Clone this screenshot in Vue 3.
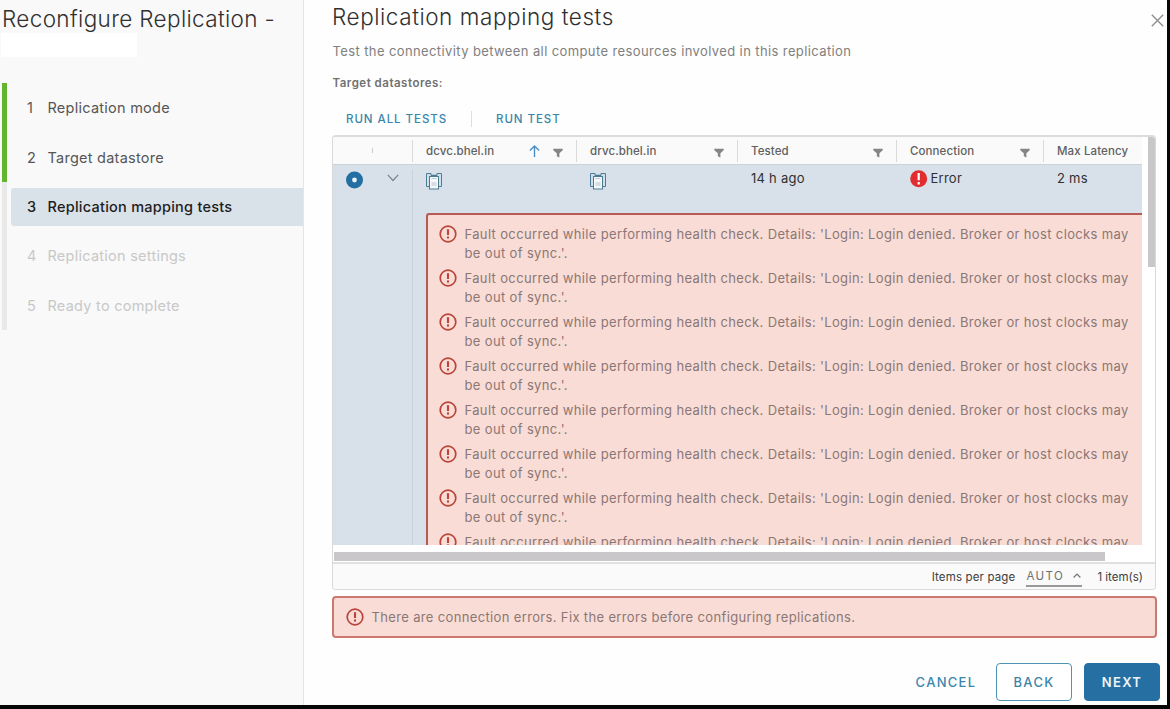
<script setup>
import { h } from 'vue'

const steps = [
  { n: 1, label: 'Replication mode', state: 'done' },
  { n: 2, label: 'Target datastore', state: 'done' },
  { n: 3, label: 'Replication mapping tests', state: 'current' },
  { n: 4, label: 'Replication settings', state: 'pending' },
  { n: 5, label: 'Ready to complete', state: 'pending' },
]

const faults = Array.from({ length: 8 }, (_, i) => i)

const AlertIcon = () =>
  h('svg', { width: 18, height: 18, viewBox: '0 0 18 18', fill: 'none', stroke: '#b8443a' }, [
    h('circle', { cx: 9, cy: 9, r: 7.8, 'stroke-width': 1.7 }),
    h('path', { d: 'M9 4.2V10', 'stroke-width': 2.1 }),
    h('path', { d: 'M9 11.4V13.6', 'stroke-width': 2.1 }),
  ])

const FilterIcon = () =>
  h('svg', { width: 10, height: 10, viewBox: '0 0 10 10', fill: '#858585' }, [
    h('path', { d: 'M0.3 0.8H9.7V2.2L6.4 5.2V9.6L3.8 8.2V5.2L0.3 2.2Z' }),
  ])

const HostIcon = () =>
  h('svg', { width: 16, height: 17, viewBox: '0 0 16 17', fill: 'none', stroke: '#4d7c95' }, [
    h('path', { d: 'M3.5 13.5H0.5V0.5H5V2.5', fill: '#cfe0ea' }),
    h('path', { d: 'M12.5 13.5H15.5V0.5H11V2.5', fill: '#cfe0ea' }),
    h('path', { d: 'M5 2.5H11', 'stroke-width': 1.4 }),
    h('rect', { x: 3.5, y: 3.5, width: 9, height: 12.5, fill: '#f5f8fa' }),
    h('path', { d: 'M5.5 5.5H10.5', stroke: '#bccdd7' }),
    h('rect', { x: 5.5, y: 9, width: 5, height: 4, fill: '#d3dde3', stroke: 'none' }),
  ])
</script>

<template>
  <div class="screen">
    <div class="wizard">
      <aside class="sidebar">
        <h1>Reconfigure Replication -</h1>
        <div class="blank"></div>
        <ol class="steps">
          <li v-for="s in steps" :key="s.n" :class="s.state">
            <div class="step">
              <span class="num">{{ s.n }}</span>
              <span class="label">{{ s.label }}</span>
            </div>
          </li>
        </ol>
      </aside>

      <main class="main">
        <header class="title-row">
          <h2>Replication mapping tests</h2>
          <svg class="close" width="13" height="13" viewBox="0 0 13 13" stroke="#8f8f8f" stroke-width="1.4">
            <path d="M0.8 0.8L12.2 12.2M12.2 0.8L0.8 12.2" />
          </svg>
        </header>
        <p class="desc">Test the connectivity between all compute resources involved in this replication</p>
        <p class="target">Target datastores:</p>
        <div class="actions">
          <span class="run-all">RUN ALL TESTS</span>
          <i class="divider"></i>
          <span class="run-one">RUN TEST</span>
        </div>

        <section class="grid">
          <div class="viewport">
            <div class="table">
              <div class="row head">
                <div class="cell c0"><i class="tick"></i></div>
                <div class="cell"><span>dcvc.bhel.in</span>
                  <svg class="sort" width="11" height="12" viewBox="0 0 11 12" fill="none" stroke="#4a90c8" stroke-width="1.4">
                    <path d="M5.5 12V1.2M0.9 5.6L5.5 1L10.1 5.6" />
                  </svg>
                  <FilterIcon class="filter" />
                </div>
                <div class="cell"><span>drvc.bhel.in</span><FilterIcon class="filter" /></div>
                <div class="cell"><span>Tested</span><FilterIcon class="filter" /></div>
                <div class="cell"><span>Connection</span><FilterIcon class="filter" /></div>
                <div class="cell"><span>Max Latency</span></div>
              </div>
              <div class="body">
                <div class="gutter">
                  <svg width="18" height="18" viewBox="0 0 18 18">
                    <circle cx="9.5" cy="9" r="8.5" fill="#236fa3" />
                    <circle cx="9.5" cy="9" r="2.4" fill="#e8f2f8" />
                  </svg>
                  <svg class="chev" width="12" height="8" viewBox="0 0 12 8" fill="none" stroke="#7d878d" stroke-width="1.3">
                    <path d="M0.8 0.9L6 6.5L11.2 0.9" />
                  </svg>
                </div>
                <div class="content">
                  <div class="row data">
                    <div class="cell"><HostIcon /></div>
                    <div class="cell"><HostIcon /></div>
                    <div class="cell"><span class="v-ago">14 h ago</span></div>
                    <div class="cell">
                      <svg class="bang" width="18" height="18" viewBox="0 0 18 18">
                        <circle cx="8.7" cy="8.7" r="8.5" fill="#e12d30" />
                        <path d="M8.7 3V10.2M8.7 12V14.4" stroke="#fff" stroke-width="2.2" />
                      </svg>
                      <span class="v-err">Error</span>
                    </div>
                    <div class="cell"><span class="v-ms">2 ms</span></div>
                  </div>
                  <div class="faults">
                    <div v-for="f in faults" :key="f" class="fault">
                      <AlertIcon />
                      <p>Fault occurred while performing health check. Details: 'Login: Login denied. Broker or host clocks may be out of sync.'.</p>
                    </div>
                  </div>
                </div>
              </div>
            </div>
            <div class="vtrack"><div class="vthumb"></div></div>
          </div>
          <div class="htrack"><div class="hthumb"></div></div>
          <footer class="pager">
            <span class="ipp">Items per page</span>
            <span class="select"><span class="auto">AUTO</span>
              <svg width="8" height="5" viewBox="0 0 8 5" fill="none" stroke="#777" stroke-width="1.2"><path d="M0.6 4.5L4 1L7.4 4.5" /></svg>
            </span>
            <span class="count">1 item(s)</span>
          </footer>
        </section>

        <div class="alert">
          <AlertIcon />
          <span>There are connection errors. Fix the errors before configuring replications.</span>
        </div>

        <div class="buttons">
          <button class="link"><span>CANCEL</span></button>
          <button class="outline"><span>BACK</span></button>
          <button class="solid"><span>NEXT</span></button>
        </div>
      </main>
    </div>
  </div>
</template>

<style>
body { margin: 0; overflow: hidden; }
</style>

<style scoped>
* { box-sizing: border-box; }
.screen {
  width: 1170px; height: 709px; background: #060808; overflow: hidden;
  font-family: Inter, "Open Sans", sans-serif; font-size: 13px; color: #6a6a6a;
}
.screen svg { display: block; flex: none; }
.wizard { display: flex; width: 1167px; height: 705px; background: #fefefe; }
h1, h2, p, ol { margin: 0; padding: 0; font-weight: 400; }
span { white-space: nowrap; }

.sidebar { width: 304px; flex: none; background: #f9f9f9; border-right: 1px solid #e6e4e7; }
h1 { height: 33px; padding: 4px 0 0 2px; font-size: 22.5px; line-height: 30px; font-weight: 300; letter-spacing: 0.35px; color: #303030; white-space: nowrap; }
.blank { width: 136px; height: 24px; margin-left: 1px; background: #fff; }
.steps { margin: 26px 0 0 2px; list-style: none; }
.steps li { height: 49.4px; padding: 6px 0 6px 4px; border-left: 5px solid #e9e9e9; font-size: 14.5px; letter-spacing: 0.25px; color: #565656; }
.steps li.done { border-color: #62b52d; }
.step { display: flex; align-items: center; height: 38px; border-radius: 3px 0 0 3px; }
.steps li:not(.current) .step { padding-bottom: 0.5px; }
.num { width: 20.5px; margin-left: 16px; }
.steps .current .step { background: #d9e1e9; color: #1d1d1d; font-weight: 500; }
.steps .pending .step { color: #c8c8c8; }

.main { flex: 1; min-width: 0; padding: 0 3px 0 28px; display: flex; flex-direction: column; }
.title-row { display: flex; justify-content: space-between; height: 35px; }
h2 { font-size: 22.5px; line-height: 33px; font-weight: 300; letter-spacing: 0.56px; color: #303030; }
.close { margin-top: 14px; }
.desc { height: 32px; line-height: 32px; padding-left: 0.5px; color: #808080; letter-spacing: 0.39px; }
.target { height: 32px; line-height: 33px; padding-left: 0.5px; font-size: 11.5px; font-weight: 600; letter-spacing: 0.5px; color: #707070; }
.actions { display: flex; align-items: center; height: 36px; padding-left: 14px; padding-top: 4px; color: #3a86ab; font-size: 11.5px; font-weight: 500; letter-spacing: 0.95px; }
.run-all { width: 125px; }
.divider { width: 1px; height: 16px; background: #dedede; margin-right: 24px; }

.grid { width: 824px; height: 455px; border: 1px solid #d9d9d9; border-top: 2px solid #dcdcdc; border-radius: 4px; background: #fff; overflow: hidden; flex: none; }
.viewport { display: flex; height: 408px; }
.table { width: 809px; flex: none; overflow: hidden; }
.row { display: grid; }
.head { grid-template-columns: 79px 164px 161px 159px 147px 99px; height: 28px; background: #fafafa; border-bottom: 1px solid #ccd2d6; font-size: 11.5px; font-weight: 500; letter-spacing: 0.1px; color: #606060; }
.head .cell { display: flex; align-items: center; height: 22px; margin-top: 3px; padding: 0 0 1px 13px; border-left: 1px solid #dadada; }
.head .c0 { border: 0; padding-left: 39px; }
.tick { width: 1px; height: 5px; background: #ccc; }
.filter { margin: 5px 13.5px 0 auto; }
.sort { margin-left: auto; }
.sort + .filter { margin-left: 13px; }
.body { display: flex; height: 380px; background: #d8e1e9; overflow: hidden; }
.gutter { display: flex; align-items: flex-start; width: 79px; padding: 6px 0 0 12px; }
.chev { margin: 3px 0 0 24px; }
.content { flex: 1; min-width: 0; margin-top: 5px; border-left: 1px solid #c9d2db; }
.data { grid-template-columns: 164px 161px 159px 147px 98px; height: 43px; margin-left: -1px; font-size: 13px; letter-spacing: 0.25px; color: #303030; }
.data .cell { display: flex; align-items: flex-start; padding-left: 14px; line-height: 17px; }
.data .cell > svg { margin-top: 3px; }
.data .cell > .bang { margin: 0 3px 0 -0.5px; }
.faults { margin-left: 12.5px; height: 360px; padding: 10px 0 0 11.5px; background: #fadcd6; border: 2px solid #b85a54; border-right: 0; border-radius: 3px 0 0 0; color: #8a7774; letter-spacing: 0.355px; }
.fault { display: flex; height: 44px; gap: 7.5px; line-height: 19px; }
.fault p { width: 676px; }
.vtrack { width: 8px; margin-left: 5px; padding-left: 1px; background: #fff; }
.vthumb { width: 7px; height: 130px; background: #c9c7ca; }
.htrack { height: 19px; padding: 7px 0 0 1px; border-bottom: 2px solid #e0e0e0; }
.hthumb { width: 771px; height: 9px; background: #c9c7ca; }
.pager { display: flex; justify-content: flex-end; align-items: center; height: 25px; padding-right: 12px; background: #fafafa; font-size: 11.5px; color: #404040; }
.ipp { letter-spacing: 0.15px; }
.select { display: flex; align-items: center; justify-content: space-between; width: 56px; height: 20px; margin: 0 15px 0 11px; padding-right: 1px; border-bottom: 2px solid #999; color: #707070; letter-spacing: 1.4px; }

.alert { display: flex; align-items: center; gap: 8px; width: 825px; height: 42px; margin-top: 6px; padding-left: 11.5px; border: 2px solid #cb7871; border-radius: 4px; background: #fadcd6; color: #8a7774; letter-spacing: 0.35px; flex: none; }
.buttons { display: flex; justify-content: flex-end; margin: 25px 4px 0 0; }
button { width: 76px; height: 38px; padding: 0; border: 1.5px solid #4f93b3; border-radius: 4px; background: #fff; color: #3a86ab; font: 500 13px Inter, sans-serif; letter-spacing: 1.3px; }
.link { border-color: transparent; margin-right: 12px; background: none; }
.outline { margin-right: 12px; }
.solid { background: #256fa2; border-color: #256fa2; color: #edf5fa; font-weight: 600; }
</style>
